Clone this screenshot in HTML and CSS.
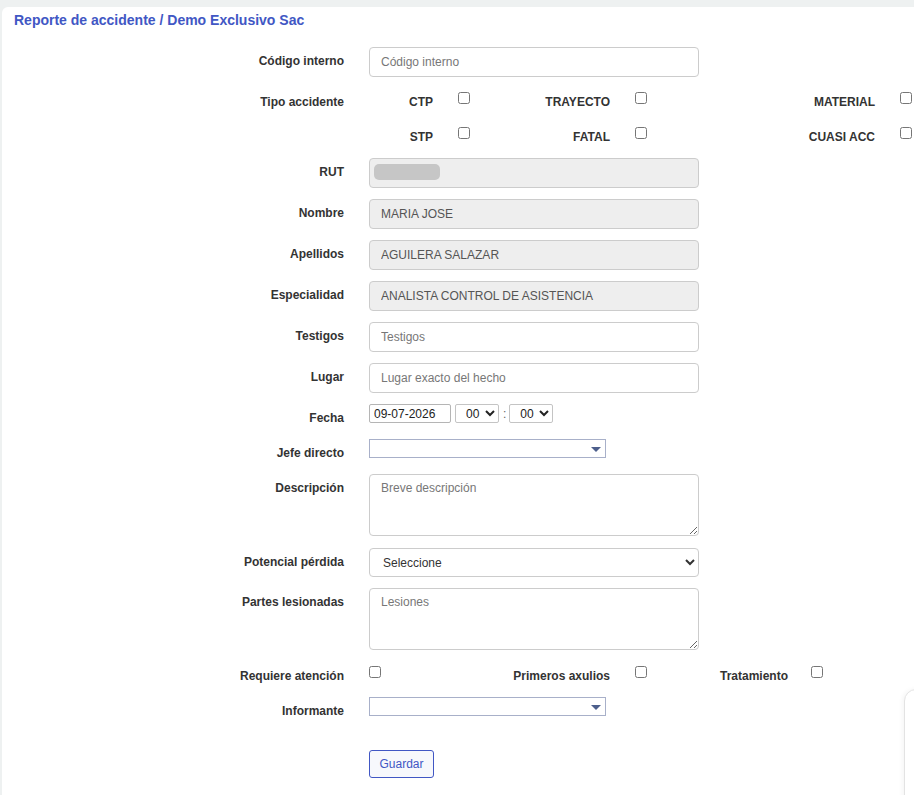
FILE: index.html
```html
<!DOCTYPE html>
<html lang="es">
<head>
  <meta charset="UTF-8" />
  <meta name="viewport" content="width=device-width, initial-scale=1.0"/>
  <title>Reporte de accidente</title>
  <link rel="stylesheet" href="styles.css">
</head>
<body>

  <div class="card">
    <h1 class="title">Reporte de accidente / Demo Exclusivo Sac</h1>

    <form class="form" onsubmit="return false">
      <div class="row">
        <label class="lbl">Código interno</label>
        <div class="field"><input class="input" type="text" placeholder="Código interno"></div>
      </div>

      <div class="row row-chk">
        <label class="lbl">Tipo accidente</label>
        <div class="opt"><span class="opt-text w89">CTP</span><input type="checkbox" class="chk"></div>
        <div class="opt"><span class="opt-text w140">TRAYECTO</span><input type="checkbox" class="chk"></div>
        <div class="opt"><span class="opt-text w228">MATERIAL</span><input type="checkbox" class="chk"></div>
      </div>
      <div class="row row-chk">
        <label class="lbl"></label>
        <div class="opt"><span class="opt-text w89">STP</span><input type="checkbox" class="chk"></div>
        <div class="opt"><span class="opt-text w140">FATAL</span><input type="checkbox" class="chk"></div>
        <div class="opt"><span class="opt-text w228">CUASI ACC</span><input type="checkbox" class="chk"></div>
      </div>

      <div class="row">
        <label class="lbl">RUT</label>
        <div class="field">
          <div class="input readonly"><span class="redacted"></span></div>
        </div>
      </div>
      <div class="row">
        <label class="lbl">Nombre</label>
        <div class="field"><input class="input readonly" type="text" value="MARIA JOSE" readonly></div>
      </div>
      <div class="row">
        <label class="lbl">Apellidos</label>
        <div class="field"><input class="input readonly" type="text" value="AGUILERA SALAZAR" readonly></div>
      </div>
      <div class="row">
        <label class="lbl">Especialidad</label>
        <div class="field"><input class="input readonly" type="text" value="ANALISTA CONTROL DE ASISTENCIA" readonly></div>
      </div>
      <div class="row">
        <label class="lbl">Testigos</label>
        <div class="field"><input class="input" type="text" placeholder="Testigos"></div>
      </div>
      <div class="row">
        <label class="lbl">Lugar</label>
        <div class="field"><input class="input" type="text" placeholder="Lugar exacto del hecho"></div>
      </div>

      <div class="row">
        <label class="lbl">Fecha</label>
        <div class="field date-field">
          <input class="date-input" type="text" value="09-07-2026">
          <select class="time-select"><option>00</option></select>
          <span class="colon">:</span>
          <select class="time-select"><option>00</option></select>
        </div>
      </div>

      <div class="row">
        <label class="lbl">Jefe directo</label>
        <div class="field">
          <div class="combo"><span class="combo-arrow"></span></div>
        </div>
      </div>

      <div class="row row-area">
        <label class="lbl">Descripción</label>
        <div class="field"><textarea class="input area" placeholder="Breve descripción"></textarea></div>
      </div>

      <div class="row">
        <label class="lbl">Potencial pérdida</label>
        <div class="field">
          <select class="input select">
            <option>Seleccione</option>
          </select>
        </div>
      </div>

      <div class="row row-area">
        <label class="lbl">Partes lesionadas</label>
        <div class="field"><textarea class="input area" placeholder="Lesiones"></textarea></div>
      </div>

      <div class="row row-chk">
        <label class="lbl">Requiere atención</label>
        <input type="checkbox" class="chk">
        <div class="opt"><span class="opt-text w229">Primeros axulios</span><input type="checkbox" class="chk"></div>
        <div class="opt"><span class="opt-text w141">Tratamiento</span><input type="checkbox" class="chk chk-tight"></div>
      </div>

      <div class="row">
        <label class="lbl">Informante</label>
        <div class="field">
          <div class="combo"><span class="combo-arrow"></span></div>
        </div>
      </div>

      <div class="row row-btn">
        <label class="lbl"></label>
        <div class="field"><button class="save-btn" type="submit">Guardar</button></div>
      </div>
    </form>
  </div>

  <div class="side-widget"></div>

</body>
</html>
```

FILE: styles.css
```css
body {
  margin: 0;
  font-family: "Liberation Sans", Arial, sans-serif;
  font-size: 12px;
  color: #333;
  background-color: #eef1f1;
  overflow: hidden;
}

.card {
  margin: 7px 0 0 2px;
  background-color: #fff;
  border-radius: 6px 0 0 0;
  min-height: 788px;
  padding-top: 5px;
}

.title {
  margin: 0;
  padding: 0 12px;
  font-size: 14px;
  line-height: 16px;
  font-weight: bold;
  color: #4157c4;
}

.form {
  margin-top: 19px;
}

.row {
  display: flex;
  align-items: flex-start;
  margin-bottom: 11px;
}

.row-area {
  margin-bottom: 12px;
}

.lbl {
  width: 342px;
  flex-shrink: 0;
  box-sizing: border-box;
  text-align: right;
  font-weight: bold;
  line-height: 15px;
  padding: 7px 0 2px;
  min-height: 24px;
  color: #333;
}

.field {
  margin-left: 25px;
}

.input {
  display: block;
  width: 330px;
  height: 30px;
  box-sizing: border-box;
  padding: 6px 11px;
  border: 1px solid #ccc;
  border-radius: 4px;
  font-family: inherit;
  font-size: 12px;
  color: #555;
  background-color: #fff;
  outline: none;
}

.input::placeholder {
  color: #777;
}

.readonly {
  background-color: #eee;
}

.redacted {
  display: block;
  width: 66px;
  height: 16px;
  margin: -1px 0 0 -7px;
  border-radius: 5px;
  background-color: #c6c6c6;
  filter: blur(0.6px);
}

/* checkbox rows */
.opt {
  display: flex;
  align-items: flex-start;
}

.opt-text {
  text-align: right;
  font-weight: bold;
  line-height: 15px;
  padding-top: 7px;
}

.w89 { width: 89px; }
.w140 { width: 140px; }
.w228 { width: 228px; }
.w229 { width: 229px; }
.w141 { width: 141px; }

.chk {
  width: 12px;
  height: 12px;
  margin: 4px 0 0 25px;
  flex-shrink: 0;
}

.chk-tight {
  margin-left: 23px;
}

/* date + time */
.date-field {
  display: flex;
  align-items: center;
}

.date-input {
  width: 82px;
  height: 19px;
  box-sizing: border-box;
  padding: 0 4px;
  border: 1px solid #b5b5b5;
  border-radius: 2px;
  font-family: inherit;
  font-size: 12px;
  color: #222;
}

.time-select {
  height: 19px;
  width: 44px;
  box-sizing: border-box;
  margin-left: 4px;
  padding: 0 0 0 6px;
  border: 1px solid #c4c4c4;
  border-radius: 2px;
  background-color: #fff;
  font-family: inherit;
  font-size: 12px;
  color: #222;
}

.colon {
  margin: 0 -1px 0 4px;
  color: #666;
}

/* select2-like combo */
.combo {
  position: relative;
  width: 237px;
  height: 19px;
  box-sizing: border-box;
  border: 1px solid #a8b0c9;
  background-color: #fff;
}

.combo-arrow {
  position: absolute;
  right: 4px;
  top: 7px;
  width: 0;
  height: 0;
  border-left: 5px solid transparent;
  border-right: 5px solid transparent;
  border-top: 5px solid #4d5f8c;
}

.area {
  height: 62px;
  resize: vertical;
  line-height: 15px;
}

.select {
  height: 29px;
  padding: 0 6px 0 9px;
  color: #333;
}

.row-btn {
  margin-top: 29px;
}

.save-btn {
  width: 65px;
  height: 28px;
  border: 1px solid #4157c4;
  border-radius: 3px;
  background-color: #f7f8fc;
  font-family: inherit;
  font-size: 12px;
  color: #4157c4;
  cursor: pointer;
}

.side-widget {
  position: fixed;
  left: 904px;
  top: 689px;
  width: 60px;
  height: 200px;
  background-color: #fff;
  border: 1px solid #e3e3e3;
  border-radius: 12px 0 0 0;
  box-shadow: -2px 0 4px rgba(0, 0, 0, 0.04);
}
```
